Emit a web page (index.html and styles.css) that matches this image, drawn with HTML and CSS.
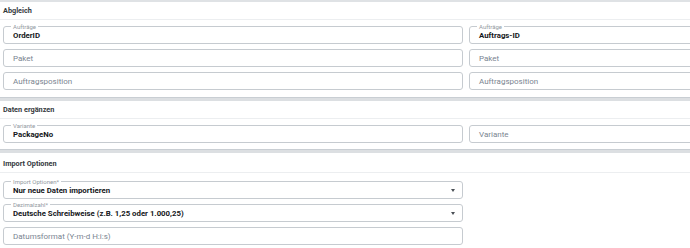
FILE: index.html
```html
<!DOCTYPE html>
<html lang="de">
<head>
<meta charset="utf-8">
<link rel="stylesheet" href="styles.css">
</head>
<body>
<div class="page">
  <div class="topbar"></div>
  <section class="section">
    <div class="section-head">Abgleich</div>
    <div class="section-body two-col">
      <div class="field"><span class="label">Aufträge</span><span class="value">OrderID</span></div>
      <div class="field"><span class="label">Aufträge</span><span class="value">Auftrags-ID</span></div>
      <div class="field"><span class="placeholder">Paket</span></div>
      <div class="field"><span class="placeholder">Paket</span></div>
      <div class="field"><span class="placeholder">Auftragsposition</span></div>
      <div class="field"><span class="placeholder">Auftragsposition</span></div>
    </div>
  </section>
  <div class="sep"></div>
  <section class="section">
    <div class="section-head">Daten ergänzen</div>
    <div class="section-body two-col">
      <div class="field"><span class="label">Variante</span><span class="value">PackageNo</span></div>
      <div class="field"><span class="placeholder">Variante</span></div>
    </div>
  </section>
  <div class="sep"></div>
  <section class="section">
    <div class="section-head tall">Import Optionen</div>
    <div class="section-body one-col">
      <div class="field select"><span class="label">Import Optionen*</span><span class="value">Nur neue Daten importieren</span><span class="caret"></span></div>
      <div class="field select"><span class="label">Dezimalzahl*</span><span class="value">Deutsche Schreibweise (z.B. 1,25 oder 1.000,25)</span><span class="caret"></span></div>
      <div class="field"><span class="placeholder">Datumsformat (Y-m-d H:i:s)</span></div>
    </div>
  </section>
</div>
</body>
</html>
```

FILE: styles.css
```css
html, body {
  margin: 0;
  padding: 0;
  background: #ffffff;
}
body {
  width: 690px;
  height: 248px;
  overflow: hidden;
  font-family: Roboto, "Liberation Sans", Arial, sans-serif;
}
.page {
  width: 690px;
  overflow: hidden;
}
.topbar {
  height: 2px;
  background: #dfe2e5;
}
.section-head {
  height: 17px;
  display: flex;
  align-items: center;
  padding-left: 3px;
  font-size: 7.3px;
  font-weight: 700;
  color: #34383d;
  border-bottom: 1px solid #eceef0;
}
.section-head.tall {
  height: 18px;
  padding-top: 1px;
}
.section-body {
  padding: 6px 0 6px 3px;
  display: grid;
  row-gap: 5px;
}
.two-col {
  grid-template-columns: 460px 460px;
  column-gap: 6px;
  width: 926px;
}
.section:first-of-type .section-body {
  padding-bottom: 7px;
}
.one-col {
  grid-template-columns: 460px;
  padding-top: 8px;
}
.sep {
  height: 3px;
  background: #dcdfe2;
  border-top: 1px solid #c9ced3;
}
.field {
  position: relative;
  height: 16px;
  border: 1px solid #c6cbd0;
  border-radius: 3px;
  display: flex;
  align-items: center;
  padding: 0 9px;
  box-sizing: content-box;
}
.field .label {
  position: absolute;
  top: -4px;
  left: 7px;
  padding: 0 2px;
  background: #ffffff;
  font-size: 6px;
  line-height: 7px;
  color: #939aa1;
}
.field .value {
  font-size: 7.8px;
  font-weight: 700;
  color: #15171a;
  padding-top: 1px;
}
.field .placeholder {
  font-size: 8px;
  color: #7a8591;
}
.field.select {
  justify-content: space-between;
}
.caret {
  width: 0;
  height: 0;
  border-left: 2.5px solid transparent;
  border-right: 2.5px solid transparent;
  border-top: 3px solid #4a4f55;
  margin-right: -2px;
}
```
